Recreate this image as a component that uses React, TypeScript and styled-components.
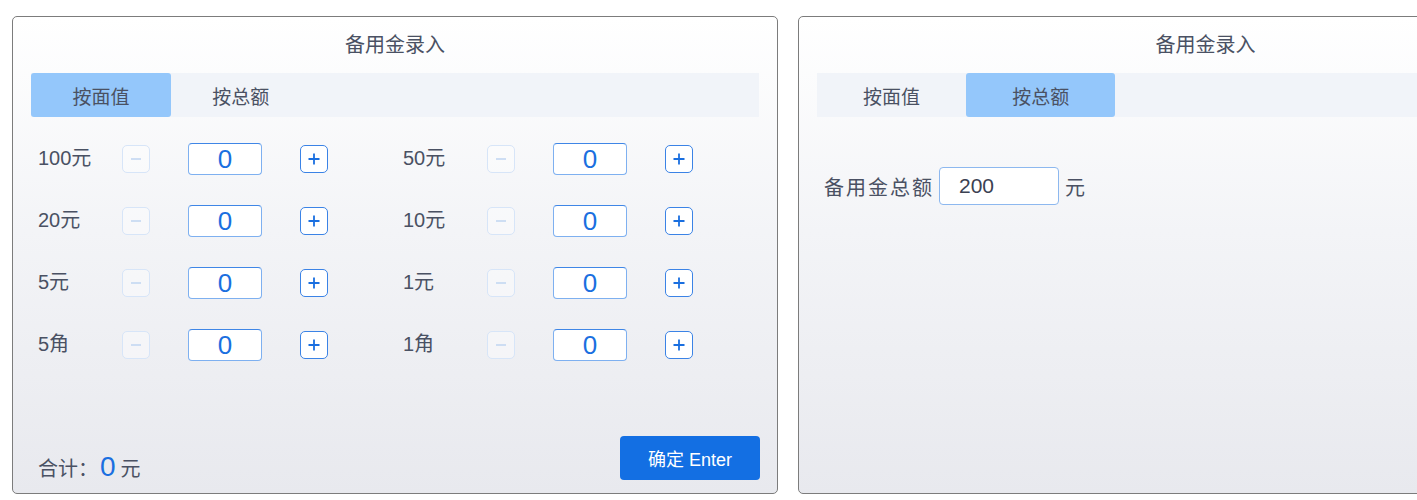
import React, {FC, useState} from 'react';
import styled, {createGlobalStyle} from 'styled-components';

const GlobalStyle = createGlobalStyle`
  body {
    margin: 0;
    background: #fff;
    font-family: "Liberation Sans", "Noto Sans CJK SC", sans-serif;
    color: #4a5163;
  }
`;

type Denom = {label: string; value: number};

const denoms: Denom[] = [
    {label: '100元', value: 100},
    {label: '50元', value: 50},
    {label: '20元', value: 20},
    {label: '10元', value: 10},
    {label: '5元', value: 5},
    {label: '1元', value: 1},
    {label: '5角', value: 0.5},
    {label: '1角', value: 0.1},
];

const Page = styled.div`
  display: flex;
  gap: 20px;
  padding: 16px 0 0 12px;
  width: 1700px;
`;

const Panel = styled.div<{ $width: number }>`
  display: flex;
  flex-direction: column;
  box-sizing: border-box;
  width: ${(p) => p.$width}px;
  height: 478px;
  border: 1px solid #7c7c7c;
  border-radius: 5px;
  background: linear-gradient(180deg, #ffffff 0%, #f3f4f7 45%, #e8e9ee 100%);
  flex-shrink: 0;
`;

const Title = styled.div`
  height: 56px;
  line-height: 56px;
  text-align: center;
  font-size: 20px;
  color: #4a5163;
`;

const TabBar = styled.div`
  display: flex;
  margin: 0 18px;
  height: 44px;
  background: #f1f4f9;
`;

const Tab = styled.div<{ $active: boolean }>`
  width: 19.2%;
  display: flex;
  align-items: center;
  justify-content: center;
  font-size: 19px;
  color: #4a5163;
  border-radius: 3px;
  background: ${(p) => (p.$active ? '#94c7fb' : 'transparent')};
  cursor: pointer;
`;

const Grid = styled.div`
  display: grid;
  grid-template-columns: 365px 365px;
  row-gap: 30px;
  padding: 26px 0 0 25px;
`;

const Row = styled.div`
  display: flex;
  align-items: center;
  height: 32px;
`;

const Label = styled.span`
  width: 84px;
  font-size: 20px;
  line-height: 1;
  padding-bottom: 3px;
  color: #4a5163;
`;

const StepButton = styled.button<{ $disabled?: boolean }>`
  box-sizing: border-box;
  width: 28px;
  height: 28px;
  padding: 0;
  display: flex;
  align-items: center;
  justify-content: center;
  background: #fff;
  border: 1px solid ${(p) => (p.$disabled ? '#d7e5f8' : '#3b83e6')};
  border-radius: 5px;
  color: ${(p) => (p.$disabled ? '#c3d7f2' : '#1a6fe0')};
  background: ${(p) => (p.$disabled ? 'rgba(255,255,255,0.4)' : '#fff')};
`;

const CountInput = styled.input`
  box-sizing: border-box;
  width: 74px;
  height: 32px;
  margin: 0 38px;
  border: 1px solid #7eb0f0;
  border-top-color: #3f86e6;
  border-radius: 4px;
  text-align: center;
  font-family: "Liberation Sans", sans-serif;
  font-size: 26px;
  color: #1a6fe0;
  background: #fff;
  outline: none;
`;

const Footer = styled.div`
  margin-top: auto;
  display: flex;
  justify-content: space-between;
  align-items: flex-end;
  padding: 0 17px 13px 25px;
`;

const Total = styled.div`
  font-size: 20px;
  color: #4a5163;
  margin-bottom: -3px;
`;

const TotalNum = styled.span`
  font-size: 28px;
  color: #1a6fe0;
  margin: 0 5px 0 2px;
`;

const ConfirmButton = styled.button`
  width: 140px;
  height: 44px;
  border: none;
  border-radius: 4px;
  background: #136fe3;
  color: #fff;
  font-family: "Liberation Sans", "Noto Sans CJK SC", sans-serif;
  font-size: 18px;
`;

const AmountRow = styled.div`
  display: flex;
  align-items: center;
  padding: 50px 0 0 25px;
  font-size: 20px;
  color: #4a5163;
`;

const AmountLabel = styled.span`
  letter-spacing: 2px;
`;

const AmountInput = styled.input`
  box-sizing: border-box;
  width: 120px;
  height: 38px;
  margin: 0 6px 0 5px;
  padding-left: 19px;
  border: 1px solid #8db8ef;
  border-radius: 4px;
  font-family: "Liberation Sans", sans-serif;
  font-size: 21px;
  color: #3b4152;
  background: #fff;
  outline: none;
`;

const Minus = () => (
    <svg width="14" height="14" viewBox="0 0 14 14">
        <path d="M2 7h10" stroke="currentColor" strokeWidth="1.6"/>
    </svg>
);

const Plus = () => (
    <svg width="14" height="14" viewBox="0 0 14 14">
        <path d="M1.5 7h11M7 1.5v11" stroke="currentColor" strokeWidth="1.8"/>
    </svg>
);

const Tabs: FC<{ active: number }> = ({active}) => (
    <TabBar>
        <Tab $active={active === 0}>按面值</Tab>
        <Tab $active={active === 1}>按总额</Tab>
    </TabBar>
);

const DenomPanel = () => {
    const [counts] = useState<number[]>(denoms.map(() => 0));
    const total = denoms.reduce((sum, d, i) => sum + d.value * counts[i], 0);

    return (
        <Panel $width={766}>
            <Title>备用金录入</Title>
            <Tabs active={0}/>
            <Grid>
                {denoms.map((d, i) => (
                    <Row key={d.label}>
                        <Label>{d.label}</Label>
                        <StepButton $disabled={counts[i] === 0}><Minus/></StepButton>
                        <CountInput value={counts[i]} readOnly/>
                        <StepButton><Plus/></StepButton>
                    </Row>
                ))}
            </Grid>
            <Footer>
                <Total>合计：<TotalNum>{total}</TotalNum>元</Total>
                <ConfirmButton>确定 Enter</ConfirmButton>
            </Footer>
        </Panel>
    );
};

const AmountPanel = () => (
    <Panel $width={815}>
        <Title>备用金录入</Title>
        <Tabs active={1}/>
        <AmountRow>
            <AmountLabel>备用金总额</AmountLabel>
            <AmountInput value="200" readOnly/>
            元
        </AmountRow>
    </Panel>
);

export default function App() {
    return (
        <>
            <GlobalStyle/>
            <Page>
                <DenomPanel/>
                <AmountPanel/>
            </Page>
        </>
    );
}
